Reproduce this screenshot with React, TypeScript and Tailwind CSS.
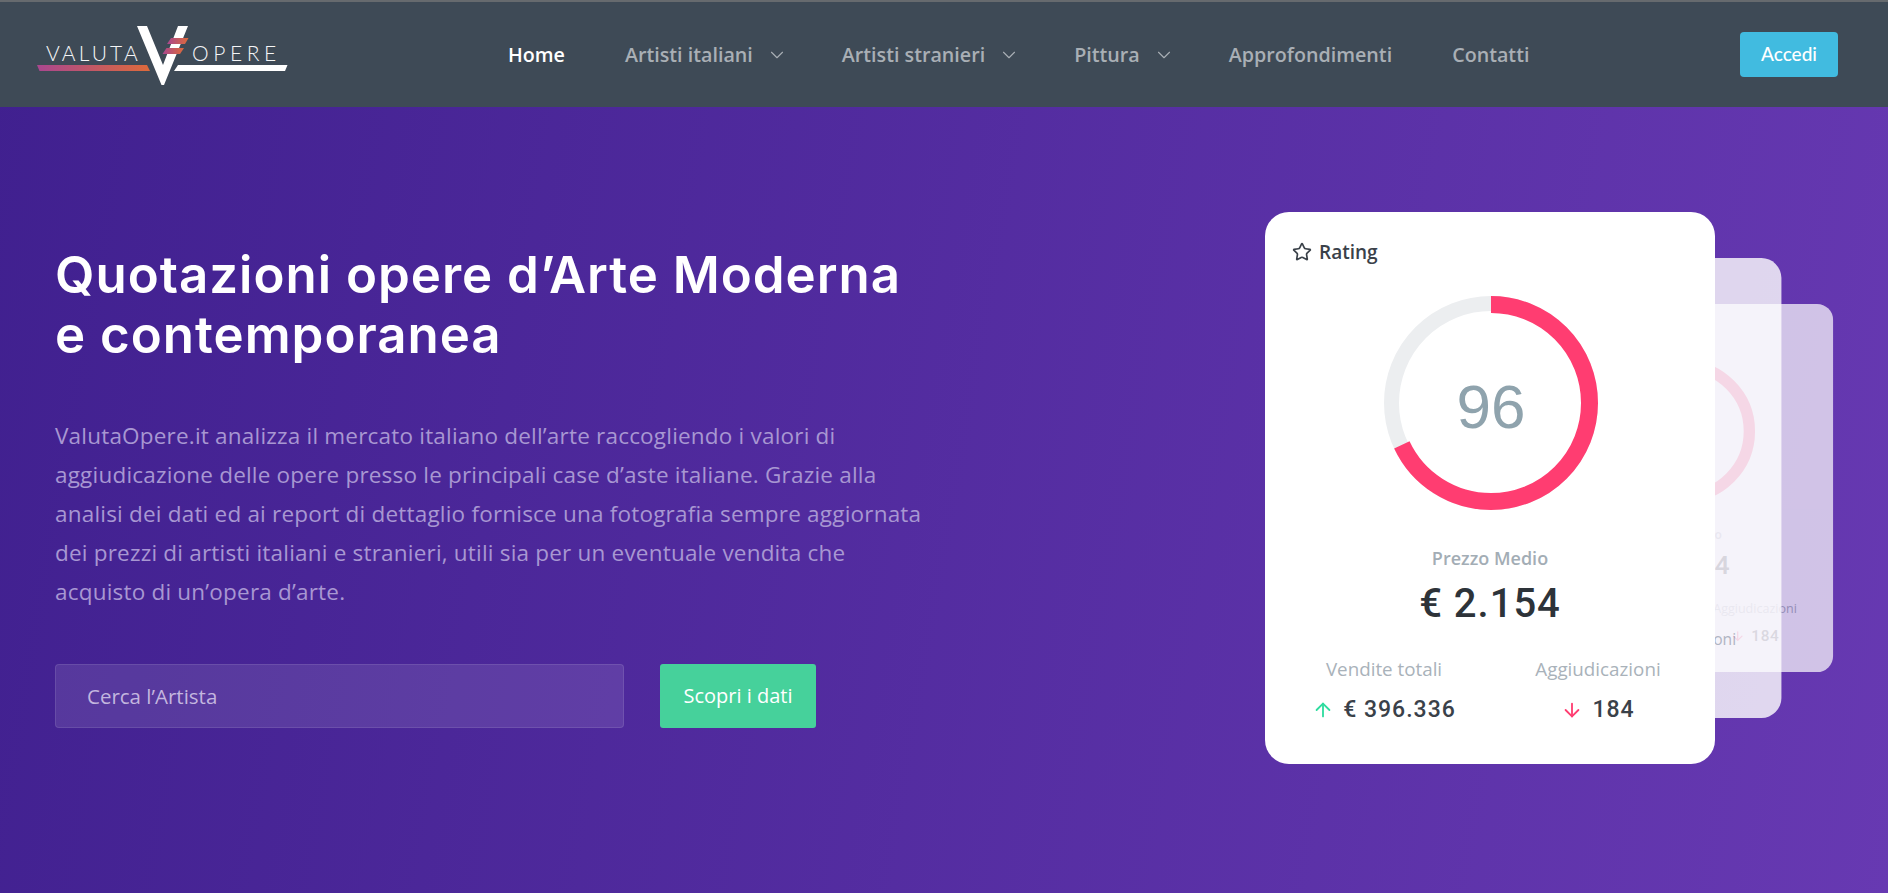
import { ArrowDown, ArrowUp, ChevronDown, Star } from "lucide-react";

function Logo() {
    return (
        <svg width="260" height="70" viewBox="0 0 260 70" className="block shrink-0" aria-label="Valuta Opere">
            <defs>
                <linearGradient id="logoBar" x1="0" x2="1" y1="0" y2="0">
                    <stop offset="0" stopColor="#a9478f" />
                    <stop offset="1" stopColor="#dd6a3b" />
                </linearGradient>
            </defs>
            <g transform="translate(-30,-20)">
                <text x="46" y="60.5" fill="#f4f5f6" fontFamily="Lato" fontWeight="300" fontSize="21" letterSpacing="3.1">VALUTA</text>
                <text x="192" y="60.5" fill="#f4f5f6" fontFamily="Lato" fontWeight="300" fontSize="21" letterSpacing="4.6">OPERE</text>
                <polygon points="37,65 147,65 150,71 39.5,71" fill="url(#logoBar)" />
                <polygon points="178,65 287.5,65 285,71 174,71" fill="#ffffff" />
                <polygon points="137,26 147,26 163,65 178,26 188,26 164,85 161.5,85" fill="#ffffff" />
                <polygon points="171,38 188.5,38 185,44 167,44" fill="url(#logoBar)" />
                <polygon points="166.5,48 184,48 180,54 162.5,54" fill="url(#logoBar)" />
            </g>
        </svg>
    );
}

function NavItem({ label, active, menu }: { label: string; active?: boolean; menu?: boolean }) {
    return (
        <a className={`flex items-center whitespace-nowrap ${active ? "text-white" : "text-[#a9afb5]"}`}>
            {label}
            {menu && <ChevronDown size={22} strokeWidth={1.2} className="-mr-[6px] ml-[13px] mt-px text-[#a9afb5]" />}
        </a>
    );
}

function Ring() {
    return (
        <div className="relative ml-[119px] mt-[30px] h-[214px] w-[214px]">
            <svg width="214" height="214" viewBox="0 0 214 214" className="block -rotate-90">
                <circle cx="107" cy="107" r="99.5" fill="none" stroke="#eceef0" strokeWidth="15" />
                <circle cx="107" cy="107" r="98.5" fill="none" stroke="#ff3d71" strokeWidth="17" pathLength="100" strokeDasharray="68 100" />
            </svg>
            <span className="absolute inset-0 flex items-center justify-center pt-[6px] font-['Liberation_Sans',sans-serif] text-[62px] text-[#8fa3ad]">96</span>
        </div>
    );
}

function RatingCard() {
    return (
        <div className="h-[552px] w-[450px] rounded-[24px] bg-white pt-[26px] font-['Open_Sans',sans-serif]">
            <div className="flex h-[28px] items-center pl-[27px] text-[19px] font-semibold text-[#3a4149]">
                <Star size={20} strokeWidth={2} className="mr-[7px] text-[#3a4149]" />
                Rating
            </div>
            <Ring />
            <p className="mt-[36px] text-center text-[18px] font-semibold leading-6 text-[#a3adb5]">Prezzo Medio</p>
            <p className="mt-[11px] text-center font-['Roboto',sans-serif] text-[40px] font-medium leading-[46px] tracking-[1px] text-[#2d3339]">€ 2.154</p>
            <div className="mt-[30px] grid grid-cols-[214px_214px] pl-[12px] text-center">
                <div>
                    <p className="text-[18.8px] leading-6 text-[#a9b2ba]">Vendite totali</p>
                    <p className="mt-[16px] flex items-center justify-center font-['Roboto',sans-serif] text-[23px] font-medium leading-[26px] tracking-[1px] text-[#3a4149]">
                        <ArrowUp size={22} strokeWidth={2} className="mr-[9px] text-[#2fdc9f]" />
                        € 396.336
                    </p>
                </div>
                <div>
                    <p className="text-[18.8px] leading-6 text-[#a9b2ba]">Aggiudicazioni</p>
                    <p className="mt-[16px] flex items-center justify-center font-['Roboto',sans-serif] text-[23px] font-medium leading-[26px] tracking-[1px] text-[#3a4149]">
                        <ArrowDown size={22} strokeWidth={2} className="mr-[9px] text-[#ff3d71]" />
                        184
                    </p>
                </div>
            </div>
        </div>
    );
}

export default function App() {
    return (
        <div className="min-h-screen overflow-hidden bg-[linear-gradient(100deg,#40208f,#6739b2)]">
            <header className="flex h-[107px] items-center border-t-2 border-[#666a6e] bg-[#3e4a56] pl-[30px] pr-[50px] font-['Open_Sans',sans-serif] text-[19.7px] font-semibold">
                <Logo />
                <nav className="ml-[218px] flex gap-[60px]">
                    <NavItem label="Home" active />
                    <NavItem label="Artisti italiani" menu />
                    <NavItem label="Artisti stranieri" menu />
                    <NavItem label="Pittura" menu />
                    <NavItem label="Approfondimenti" />
                    <NavItem label="Contatti" />
                </nav>
                <button className="ml-auto h-[45px] w-[98px] rounded-[4px] bg-[#41bbe0] font-['Lato',sans-serif] text-[19px] font-medium text-white">Accedi</button>
            </header>

            <main className="flex justify-between pl-[55px] pr-[173px] pt-[105px]">
                <section className="w-[930px] pt-[33px]">
                    <h1 className="font-['Inter',sans-serif] text-[51px] font-semibold leading-[60px] tracking-[1px] text-white">
                        Quotazioni opere d’Arte Moderna
                        <br />
                        e contemporanea
                    </h1>
                    <p className="mt-[51px] font-['Open_Sans',sans-serif] text-[22.5px] leading-[39px] tracking-[0.2px] text-[#a897d2]">
                        ValutaOpere.it analizza il mercato italiano dell’arte raccogliendo i valori di
                        <br />
                        aggiudicazione delle opere presso le principali case d’aste italiane. Grazie alla
                        <br />
                        analisi dei dati ed ai report di dettaglio fornisce una fotografia sempre aggiornata
                        <br />
                        dei prezzi di artisti italiani e stranieri, utili sia per un eventuale vendita che
                        <br />
                        acquisto di un’opera d’arte.
                    </p>
                    <div className="mt-[53px] flex gap-[36px] font-['Open_Sans',sans-serif]">
                        <input
                            placeholder="Cerca l’Artista"
                            className="h-[64px] w-[569px] rounded-[4px] border border-white/10 bg-white/10 px-[31px] text-[20.5px] text-white placeholder:text-[#c3b6df]"
                        />
                        <button className="h-[64px] w-[156px] rounded-[3px] bg-[#46d19b] text-[20px] text-white">Scopri i dati</button>
                    </div>
                </section>

                <div className="relative h-[552px] w-[450px] shrink-0">
                    <div className="absolute inset-0 translate-x-[193px] scale-[0.667] opacity-70">
                        <RatingCard />
                    </div>
                    <div className="absolute inset-0 translate-x-[104px] scale-[0.833] opacity-80">
                        <RatingCard />
                    </div>
                    <div className="absolute inset-0">
                        <RatingCard />
                    </div>
                </div>
            </main>
        </div>
    );
}
